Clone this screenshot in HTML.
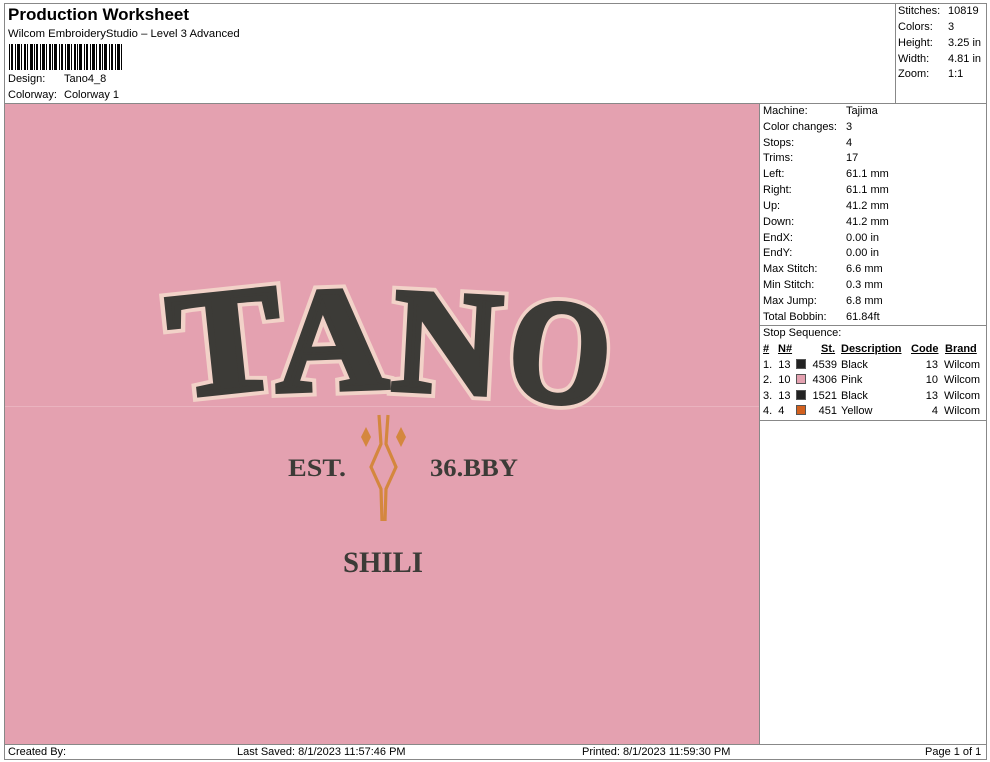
<!DOCTYPE html>
<html><head><meta charset="utf-8"><style>
*{margin:0;padding:0;box-sizing:border-box}
body{width:990px;height:762px;background:#fff;position:relative;font-family:"Liberation Sans",Arial,sans-serif;font-size:11px;color:#000;overflow:hidden}
.a{position:absolute;white-space:nowrap}
.ln{position:absolute;background:#888}
.r{position:absolute;left:763px;white-space:nowrap}
.r b{font-weight:normal;position:absolute;left:83px}
.sq{display:inline-block;width:10px;height:10px;border:1px solid #555;vertical-align:-1px}
</style></head><body>
<div class="ln" style="left:4px;top:3px;width:983px;height:1px"></div>
<div class="ln" style="left:4px;top:3px;width:1px;height:757px"></div>
<div class="ln" style="left:986px;top:3px;width:1px;height:757px"></div>
<div class="ln" style="left:4px;top:103px;width:983px;height:1px"></div>
<div class="ln" style="left:895px;top:3px;width:1px;height:100px"></div>
<div class="ln" style="left:4px;top:744px;width:983px;height:1px"></div>
<div class="ln" style="left:4px;top:759px;width:983px;height:1px"></div>
<div class="ln" style="left:759px;top:103px;width:1px;height:641px"></div>
<div class="ln" style="left:760px;top:325px;width:226px;height:1px"></div>
<div class="ln" style="left:760px;top:420px;width:226px;height:1px"></div>

<div class="a" style="left:8px;top:5px;font-size:17px;font-weight:bold">Production Worksheet</div>
<div class="a" style="left:8px;top:28px;font-size:11.3px">Wilcom EmbroideryStudio – Level 3 Advanced</div>
<svg class="a" style="left:9px;top:44px" width="113" height="26">
<g fill="#000">
<rect x="0" width="1" height="26"/><rect x="2" width="2" height="26"/><rect x="6" width="1" height="26"/><rect x="8" width="3" height="26"/><rect x="12" width="1" height="26"/><rect x="15" width="2" height="26"/><rect x="18" width="1" height="26"/><rect x="21" width="3" height="26"/><rect x="25" width="1" height="26"/><rect x="27" width="2" height="26"/><rect x="31" width="1" height="26"/><rect x="33" width="3" height="26"/><rect x="37" width="1" height="26"/><rect x="40" width="2" height="26"/><rect x="43" width="1" height="26"/><rect x="45" width="3" height="26"/><rect x="50" width="1" height="26"/><rect x="52" width="2" height="26"/><rect x="56" width="1" height="26"/><rect x="58" width="3" height="26"/><rect x="62" width="1" height="26"/><rect x="65" width="2" height="26"/><rect x="68" width="1" height="26"/><rect x="70" width="3" height="26"/><rect x="75" width="1" height="26"/><rect x="77" width="2" height="26"/><rect x="81" width="1" height="26"/><rect x="83" width="3" height="26"/><rect x="87" width="1" height="26"/><rect x="90" width="2" height="26"/><rect x="93" width="1" height="26"/><rect x="95" width="3" height="26"/><rect x="100" width="1" height="26"/><rect x="102" width="2" height="26"/><rect x="106" width="1" height="26"/><rect x="108" width="3" height="26"/><rect x="112" width="1" height="26"/>
</g></svg>
<div class="a" style="left:8px;top:73px">Design:</div><div class="a" style="left:64px;top:73px">Tano4_8</div>
<div class="a" style="left:8px;top:89px">Colorway:</div><div class="a" style="left:64px;top:89px">Colorway 1</div>

<div class="a" style="left:898px;top:5px">Stitches:</div><div class="a" style="left:948px;top:5px">10819</div>
<div class="a" style="left:898px;top:21px">Colors:</div><div class="a" style="left:948px;top:21px">3</div>
<div class="a" style="left:898px;top:37px">Height:</div><div class="a" style="left:948px;top:37px">3.25 in</div>
<div class="a" style="left:898px;top:53px">Width:</div><div class="a" style="left:948px;top:53px">4.81 in</div>
<div class="a" style="left:898px;top:68px">Zoom:</div><div class="a" style="left:948px;top:68px">1:1</div>

<div class="r" style="top:105px">Machine:<b>Tajima</b></div>
<div class="r" style="top:121px">Color changes:<b>3</b></div>
<div class="r" style="top:137px">Stops:<b>4</b></div>
<div class="r" style="top:152px">Trims:<b>17</b></div>
<div class="r" style="top:168px">Left:<b>61.1 mm</b></div>
<div class="r" style="top:184px">Right:<b>61.1 mm</b></div>
<div class="r" style="top:200px">Up:<b>41.2 mm</b></div>
<div class="r" style="top:216px">Down:<b>41.2 mm</b></div>
<div class="r" style="top:232px">EndX:<b>0.00 in</b></div>
<div class="r" style="top:247px">EndY:<b>0.00 in</b></div>
<div class="r" style="top:263px">Max Stitch:<b>6.6 mm</b></div>
<div class="r" style="top:279px">Min Stitch:<b>0.3 mm</b></div>
<div class="r" style="top:295px">Max Jump:<b>6.8 mm</b></div>
<div class="r" style="top:311px">Total Bobbin:<b>61.84ft</b></div>
<div class="r" style="top:327px">Stop Sequence:</div>
<div class="a" style="left:763px;top:343px;font-weight:bold;text-decoration:underline">#</div>
<div class="a" style="left:778px;top:343px;font-weight:bold;text-decoration:underline">N#</div>
<div class="a" style="left:821px;top:343px;font-weight:bold;text-decoration:underline">St.</div>
<div class="a" style="left:841px;top:343px;font-weight:bold;text-decoration:underline">Description</div>
<div class="a" style="left:911px;top:343px;font-weight:bold;text-decoration:underline">Code</div>
<div class="a" style="left:945px;top:343px;font-weight:bold;text-decoration:underline">Brand</div>

<div class="a" style="left:763px;top:359px">1.&nbsp; 13</div><span class="a sq" style="left:796px;top:359px;background:#222"></span><div class="a" style="left:810px;top:359px;width:27px;text-align:right">4539</div><div class="a" style="left:841px;top:359px">Black</div><div class="a" style="left:910px;top:359px;width:28px;text-align:right">13</div><div class="a" style="left:944px;top:359px">Wilcom</div>
<div class="a" style="left:763px;top:374px">2.&nbsp; 10</div><span class="a sq" style="left:796px;top:374px;background:#e4a1b0"></span><div class="a" style="left:810px;top:374px;width:27px;text-align:right">4306</div><div class="a" style="left:841px;top:374px">Pink</div><div class="a" style="left:910px;top:374px;width:28px;text-align:right">10</div><div class="a" style="left:944px;top:374px">Wilcom</div>
<div class="a" style="left:763px;top:390px">3.&nbsp; 13</div><span class="a sq" style="left:796px;top:390px;background:#222"></span><div class="a" style="left:810px;top:390px;width:27px;text-align:right">1521</div><div class="a" style="left:841px;top:390px">Black</div><div class="a" style="left:910px;top:390px;width:28px;text-align:right">13</div><div class="a" style="left:944px;top:390px">Wilcom</div>
<div class="a" style="left:763px;top:405px">4.&nbsp; 4</div><span class="a sq" style="left:796px;top:405px;background:#d2601e"></span><div class="a" style="left:810px;top:405px;width:27px;text-align:right">451</div><div class="a" style="left:841px;top:405px">Yellow</div><div class="a" style="left:910px;top:405px;width:28px;text-align:right">4</div><div class="a" style="left:944px;top:405px">Wilcom</div>

<div class="a" style="left:5px;top:104px;width:754px;height:640px;background:#e4a1b0"></div>
<div class="a" style="left:5px;top:406px;width:754px;height:1px;background:#eab3bf"></div>
<svg class="a" style="left:5px;top:104px" width="754" height="640">
<defs>
<g id="tano" font-family="Liberation Serif,serif" font-weight="bold" font-size="152">
<text transform="translate(170,293) rotate(-6) scale(1.1,0.98)">T</text>
<text transform="translate(272,287) rotate(-2) scale(1.02,0.97)">A</text>
<text transform="translate(386,285) rotate(3) scale(0.98,0.97)">N</text>
<text transform="translate(500,292) rotate(6) scale(0.85,0.97)">O</text>
</g>
</defs>
<use href="#tano" fill="#f2d2c8" stroke="#f2d2c8" stroke-width="14" stroke-linejoin="miter"/>
<use href="#tano" fill="#3c3b37" stroke="#3c3b37" stroke-width="6" stroke-linejoin="miter"/>
<g font-family="Liberation Serif,serif" font-weight="bold" fill="#3c3b37">
<text x="283" y="372" font-size="25" textLength="58" lengthAdjust="spacingAndGlyphs">EST.</text>
<text x="425" y="372" font-size="25" textLength="88" lengthAdjust="spacingAndGlyphs">36.BBY</text>
<text x="338" y="468" font-size="30" textLength="80" lengthAdjust="spacingAndGlyphs">SHILI</text>
</g>
<g fill="none" stroke="#d4873e" stroke-width="3.2" stroke-linejoin="miter">
<path d="M374 311 L376 340 L366 363 L376 385 L377 417"/>
<path d="M383 311 L381 340 L391 363 L381 385 L380 417"/>
</g>
<g fill="#d4873e">
<path d="M361 323 L366 333 L361 343 L356 333 Z"/>
<path d="M396 323 L401 333 L396 343 L391 333 Z"/>
</g>
</svg>

<div class="a" style="left:8px;top:746px">Created By:</div>
<div class="a" style="left:237px;top:746px">Last Saved: 8/1/2023 11:57:46 PM</div>
<div class="a" style="left:582px;top:746px">Printed: 8/1/2023 11:59:30 PM</div>
<div class="a" style="left:925px;top:746px">Page 1 of 1</div>
</body></html>
